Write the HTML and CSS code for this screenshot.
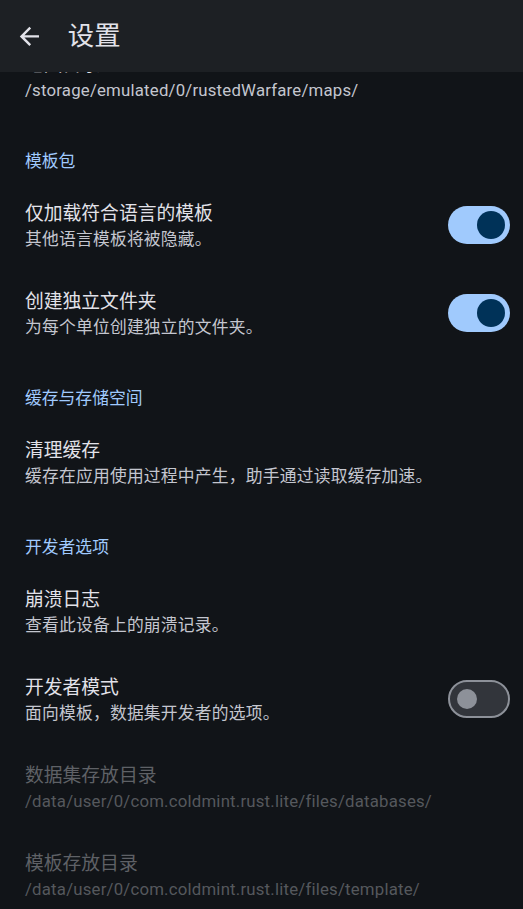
FILE: index.html
```html
<!DOCTYPE html>
<html lang="zh-CN">
<head>
<meta charset="utf-8">
<title>设置</title>
<link rel="stylesheet" href="styles.css">
</head>
<body>
<header class="appbar">
  <svg class="back" viewBox="0 0 24 24" width="28.8" height="28.8" aria-hidden="true">
    <path d="M20 11H7.83l5.59-5.59L12 4l-8 8 8 8 1.41-1.41L7.83 13H20v-2z" fill="#e2e2e9"/>
  </svg>
  <h1 class="appbar-title">设置</h1>
</header>
<main class="list">
  <div class="item">
    <div class="texts">
      <div class="title">地图目录</div>
      <div class="summary">/storage/emulated/0/rustedWarfare/maps/</div>
    </div>
  </div>

  <div class="category">模板包</div>
  <div class="item">
    <div class="texts">
      <div class="title">仅加载符合语言的模板</div>
      <div class="summary">其他语言模板将被隐藏。</div>
    </div>
    <div class="switch on"><span class="thumb"></span></div>
  </div>
  <div class="item">
    <div class="texts">
      <div class="title">创建独立文件夹</div>
      <div class="summary">为每个单位创建独立的文件夹。</div>
    </div>
    <div class="switch on"><span class="thumb"></span></div>
  </div>

  <div class="category">缓存与存储空间</div>
  <div class="item">
    <div class="texts">
      <div class="title">清理缓存</div>
      <div class="summary">缓存在应用使用过程中产生，助手通过读取缓存加速。</div>
    </div>
  </div>

  <div class="category">开发者选项</div>
  <div class="item">
    <div class="texts">
      <div class="title">崩溃日志</div>
      <div class="summary">查看此设备上的崩溃记录。</div>
    </div>
  </div>
  <div class="item">
    <div class="texts">
      <div class="title">开发者模式</div>
      <div class="summary">面向模板，数据集开发者的选项。</div>
    </div>
    <div class="switch off"><span class="thumb"></span></div>
  </div>
  <div class="item disabled">
    <div class="texts">
      <div class="title">数据集存放目录</div>
      <div class="summary">/data/user/0/com.coldmint.rust.lite/files/databases/</div>
    </div>
  </div>
  <div class="item disabled">
    <div class="texts">
      <div class="title">模板存放目录</div>
      <div class="summary">/data/user/0/com.coldmint.rust.lite/files/template/</div>
    </div>
  </div>
</main>
</body>
</html>
```

FILE: styles.css
```css
html, body {
  margin: 0;
  padding: 0;
  background: #111418;
  height: 100%;
  overflow: hidden;
}

body {
  font-family: Roboto, "Noto Sans CJK SC", sans-serif;
  color: #e2e2e9;
}

.appbar {
  position: fixed;
  top: 0;
  left: 0;
  right: 0;
  height: 72px;
  background: #1d2024;
  display: flex;
  align-items: center;
  padding-left: 15px;
  z-index: 10;
}

.back {
  display: block;
  flex: none;
}

.appbar-title {
  margin: 0 0 1px 24px;
  font-size: 26.4px;
  font-weight: 400;
  line-height: 34px;
  color: #e2e2e9;
}

.list {
  padding-top: 31.5px;
}

.category {
  padding: 29px 25px 8px 25px;
  font-size: 16.8px;
  line-height: 24px;
  color: #a0cafd;
}

.item {
  display: flex;
  align-items: center;
  padding: 21.5px 13px 17.5px 25px;
}

.texts {
  flex: 1;
  min-width: 0;
}

.title {
  font-size: 18.8px;
  line-height: 25px;
  color: #e2e2e9;
}

.summary {
  font-size: 16.8px;
  line-height: 24px;
  letter-spacing: 0.2px;
  color: #c4c6cf;
  white-space: nowrap;
}

.item.disabled .title {
  color: #5f6166;
}

.item.disabled .summary {
  color: #55585d;
}

.switch {
  flex: none;
  width: 62px;
  height: 38px;
  border-radius: 19px;
  box-sizing: border-box;
  display: flex;
  align-items: center;
  margin-top: -4px;
}

.switch.on {
  background: #a0cafd;
  justify-content: flex-end;
  padding-right: 5px;
}

.switch.on .thumb {
  width: 28px;
  height: 28px;
  border-radius: 50%;
  background: #003258;
}

.switch.off {
  background: #32353b;
  border: 2.4px solid #8d9199;
  padding-left: 7px;
}

.switch.off .thumb {
  width: 20px;
  height: 20px;
  border-radius: 50%;
  background: #8d9199;
}
```
